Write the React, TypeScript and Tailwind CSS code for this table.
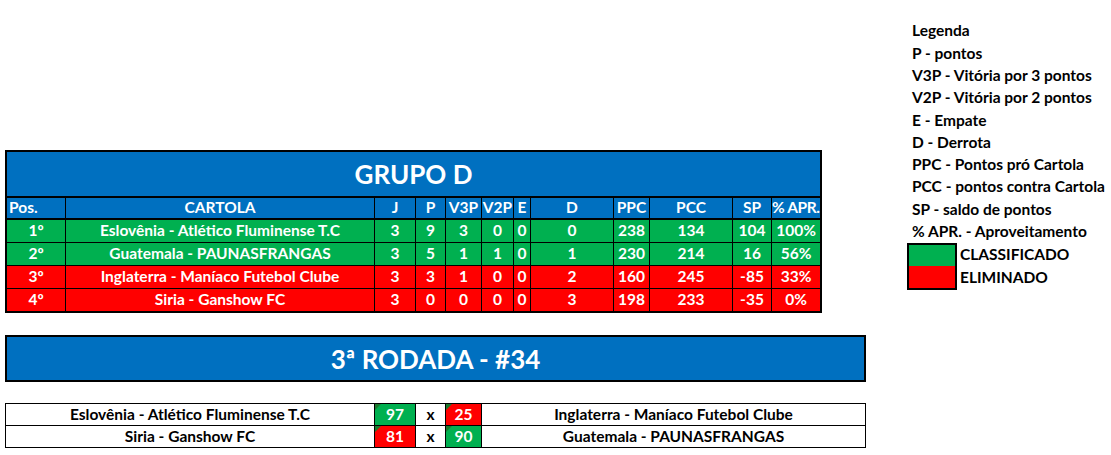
import React from "react";

const F = { fontFamily: "Lato, 'Open Sans', sans-serif" };

const rows = [
  { pos: "1º", name: "Eslovênia - Atlético Fluminense T.C", v: ["3", "9", "3", "0", "0", "0", "238", "134", "104", "100%"], c: "bg-[#00B050]" },
  { pos: "2º", name: "Guatemala - PAUNASFRANGAS", v: ["3", "5", "1", "1", "0", "1", "230", "214", "16", "56%"], c: "bg-[#00B050]" },
  { pos: "3º", name: "Inglaterra - Maníaco Futebol Clube", v: ["3", "3", "1", "0", "0", "2", "160", "245", "-85", "33%"], c: "bg-[#FF0000]" },
  { pos: "4º", name: "Siria - Ganshow FC", v: ["3", "0", "0", "0", "0", "3", "198", "233", "-35", "0%"], c: "bg-[#FF0000]" },
];

const headers = ["Pos.", "CARTOLA", "J", "P", "V3P", "V2P", "E", "D", "PPC", "PCC", "SP", "% APR."];

const legend = [
  "Legenda",
  "P - pontos",
  "V3P - Vitória por 3 pontos",
  "V2P - Vitória por 2 pontos",
  "E - Empate",
  "D - Derrota",
  "PPC - Pontos pró Cartola",
  "PCC - pontos contra Cartola",
  "SP - saldo de pontos",
  "% APR. - Aproveitamento",
];

function Score({ v, c }: { v: string; c: string }) {
  return (
    <div className={`relative flex items-center justify-center text-white ${c}`}>
      <div className="absolute left-0 top-0 w-0 h-0 border-t-[6px] border-r-[6px] border-t-[#1a7a2e] border-r-transparent" />
      {v}
    </div>
  );
}

export default function App() {
  const cols = "grid-cols-[58px_308px_40px_29px_35px_31px_16px_82px_35px_82px_38px_48px]";
  return (
    <div className="w-[1111px] h-[455px] bg-white flex items-start text-[15.5px] font-bold leading-none whitespace-nowrap" style={F}>
      <div className="ml-[5px] mt-[150px] flex flex-col w-[861px]">
        <div className="w-[817px] border-2 border-black bg-black flex flex-col">
          <div className="h-[44px] bg-[#0070C0] text-white text-[26px] flex items-center justify-center">GRUPO D</div>
          <div className={`mt-[2px] grid ${cols} gap-px h-[20px]`}>
            {headers.map((h, i) => (
              <div
                key={i}
                className={`bg-[#0070C0] text-white flex items-center ${i === 0 ? "justify-start pl-[2px]" : i === 11 ? "justify-start tracking-[-0.4px]" : "justify-center"}`}
              >
                {h}
              </div>
            ))}
          </div>
          <div className="mt-[2px] flex flex-col gap-px">
            {rows.map((r, i) => (
              <div key={i} className={`grid ${cols} gap-px h-[22px]`}>
                <div className={`${r.c} text-white flex items-center justify-center`}>{r.pos}</div>
                <div className={`${r.c} text-white flex items-center justify-center`}>{r.name}</div>
                {r.v.map((x, j) => (
                  <div key={j} className={`${r.c} text-white flex items-center justify-center`}>{x}</div>
                ))}
              </div>
            ))}
          </div>
        </div>
        <div className="mt-[22px] h-[47px] border-2 border-black bg-[#0070C0] text-white text-[26px] flex items-center justify-center">
          3ª RODADA - #34
        </div>
        <div className="mt-[21px] bg-black p-px grid grid-cols-[368px_40px_29px_35px_383px] gap-px">
          <div className="bg-white h-[21px] flex items-center justify-center text-black">Eslovênia - Atlético Fluminense T.C</div>
          <Score v="97" c="bg-[#00B050]" />
          <div className="bg-white flex items-center justify-center text-black">x</div>
          <Score v="25" c="bg-[#FF0000]" />
          <div className="bg-white flex items-center justify-center text-black">Inglaterra - Maníaco Futebol Clube</div>
          <div className="bg-white h-[21px] flex items-center justify-center text-black">Siria - Ganshow FC</div>
          <Score v="81" c="bg-[#FF0000]" />
          <div className="bg-white flex items-center justify-center text-black">x</div>
          <Score v="90" c="bg-[#00B050]" />
          <div className="bg-white flex items-center justify-center text-black">Guatemala - PAUNASFRANGAS</div>
        </div>
      </div>
      <div className="ml-[41px] mt-[20px] flex flex-col text-black">
        {legend.map((l, i) => (
          <div key={i} className="h-[22.3px] flex items-center pl-[5px]">{l}</div>
        ))}
        <div className="flex items-start">
          <div className="w-[50px] border-2 border-black flex flex-col">
            <div className="h-[21px] bg-[#00B050]" />
            <div className="h-[22px] bg-[#FF0000]" />
          </div>
          <div className="flex flex-col ml-[3px]">
            <div className="h-[23px] flex items-center">CLASSIFICADO</div>
            <div className="h-[23px] flex items-center">ELIMINADO</div>
          </div>
        </div>
      </div>
    </div>
  );
}
